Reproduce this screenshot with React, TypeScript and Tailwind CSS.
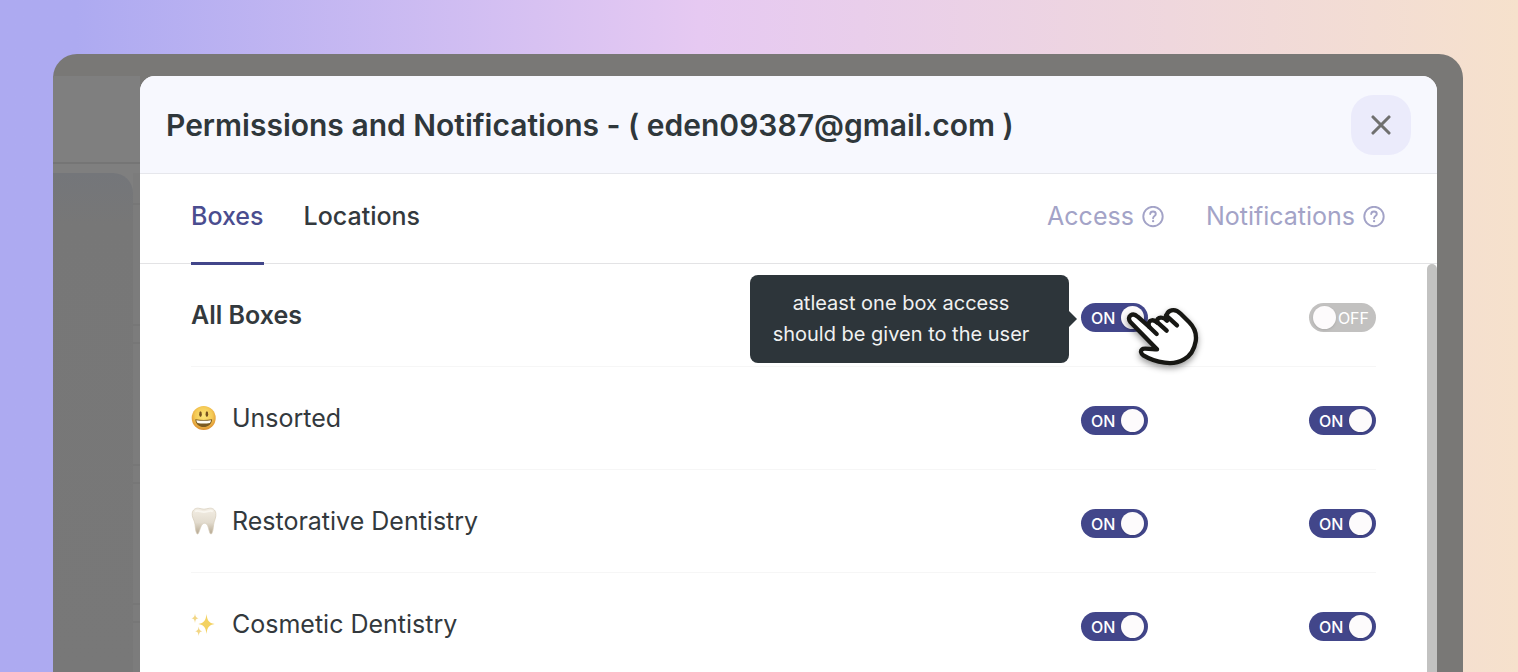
import { useState, type ReactNode } from "react";

function Toggle({ label, on }: { label: string; on: boolean }) {
  const [checked, setChecked] = useState(on);
  return (
    <label
      className={`relative flex h-[29px] w-[67px] cursor-pointer items-center justify-between rounded-full text-base font-medium text-white ${
        checked ? "bg-[#42468a] pr-1 pl-2.5" : "bg-[#c2c1c0] pr-[7px] pl-1"
      }`}
    >
      <input
        type="checkbox"
        role="switch"
        aria-label={label}
        checked={checked}
        onChange={(e) => setChecked(e.target.checked)}
        className="absolute inset-0 cursor-pointer opacity-0"
      />
      {checked && <span className="pt-0.5">ON</span>}
      <span className="size-[23px] rounded-full bg-[#fdfbfc] shadow" />
      {!checked && <span className="pt-0.5 font-normal">OFF</span>}
    </label>
  );
}

function HelpIcon() {
  return (
    <svg viewBox="0 0 22 22" className="size-[22px]" fill="none" stroke="currentColor" strokeWidth="1.9" strokeLinecap="round" aria-hidden="true">
      <circle cx="11" cy="10.5" r="9.7" />
      <path d="M8.2 8C8.300 6.400 9.500 5.500 11 5.500s2.800.9 2.800 2.500c0 1.900-2.700 2.200-2.700 4.200" />
      <circle cx="11.1" cy="15.200" r="1.150" fill="currentColor" stroke="none" />
    </svg>
  );
}

function CloseIcon() {
  return (
    <svg viewBox="0 0 20 20" className="size-5" stroke="#70706f" strokeWidth="3.1" strokeLinecap="round" aria-hidden="true">
      <path d="M2 2l16 16M18 2L2 18" />
    </svg>
  );
}

function SmileIcon() {
  return (
    <svg viewBox="0 0 26 26" className="size-[26px]" aria-hidden="true">
      <defs>
        <radialGradient id="face" cx="50%" cy="40%" r="60%">
          <stop offset="0" stopColor="#fbe67a" />
          <stop offset="0.6" stopColor="#f5ca55" />
          <stop offset="1" stopColor="#dc8f30" />
        </radialGradient>
      </defs>
      <circle cx="12.700" cy="13" r="12" fill="url(#face)" />
      <ellipse cx="9.500" cy="9.200" rx="1.300" ry="2.900" fill="#74501f" />
      <ellipse cx="15.900" cy="9.200" rx="1.300" ry="2.900" fill="#74501f" />
      <path d="M4.300 14.200c5.500 1 11.300 1 16.800 0-.2 4.700-3.800 7.800-8.400 7.800s-8.200-3.100-8.400-7.800z" fill="#7a5a22" />
      <path d="M5.300 15.200c5.100.8 9.700.8 14.800 0-.2 1.200-.6 2.100-1.200 2.700-4 .7-8.400.7-12.400 0-.6-.6-1-1.500-1.200-2.700z" fill="#fffdf5" />
    </svg>
  );
}

function ToothIcon() {
  return (
    <svg viewBox="0 0 26 28" className="h-7 w-[26px]" aria-hidden="true">
      <defs>
        <linearGradient id="tooth" x1="0" y1="0" x2="0" y2="1">
          <stop offset="0" stopColor="#f3eee4" />
          <stop offset="0.55" stopColor="#e3dccf" />
          <stop offset="1" stopColor="#b5a78f" />
        </linearGradient>
      </defs>
      <path
        d="M1.200 6.500C1.600 2.600 4.500.900 7.500 1.200c2 .2 3.500 1 5.500 1s3.500-.8 5.500-1c3-.3 5.900 1.400 6.300 5.300.4 3.500-.9 5.900-1.700 8.500-.9 3.200-.5 8-2.200 11.300-.5 1-1.400.9-1.900-.1-1.300-2.700-1.500-7.500-3.400-9.200-1.200-1-2.800-1-4 0-2 1.700-2.600 6.300-4.100 9.200-.5 1-1.400 1.100-1.900.1-1.500-3.200-1.100-8.100-2.100-11.300C2.700 12.400.900 10 1.200 6.500z"
        fill="url(#tooth)" stroke="#d5cbb9" strokeWidth=".7"
      />
      <path d="M4 4.500c2.500-2 5.500.5 9 .6 3.500-.1 6.500-2.600 9-.6" fill="none" stroke="#f9f6ef" strokeWidth="1.800" />
    </svg>
  );
}

function SparklesIcon() {
  return (
    <svg viewBox="0 0 26 26" className="size-[26px]" fill="#f2d684" aria-hidden="true">
      <path d="M15.500 3c.8 6.600 2.200 8.900 8.200 10-6 1.100-7.400 3.400-8.200 10-.8-6.600-2.200-8.900-8.200-10 6-1.100 7.400-3.400 8.200-10z" fill="#f3d261" />
      <path d="M4 2.500c.4 3.100 1 4.200 3.500 4.700C5 7.700 4.400 8.800 4 11.900 3.600 8.800 3 7.700.500 7.200 3 6.700 3.600 5.600 4 2.500z" />
      <path d="M7.700 15.500c.4 3.100 1 4.200 3.500 4.700-2.500.5-3.100 1.600-3.500 4.700-.4-3.100-1-4.200-3.500-4.700 2.500-.5 3.100-1.600 3.500-4.700z" />
    </svg>
  );
}

function HandPointer() {
  return (
    <svg viewBox="195 108 228 192" className="pointer-events-none absolute top-[3px] left-11 z-20 h-16 w-[76px] overflow-visible drop-shadow-[0_3px_3px_rgba(0,0,0,0.4)]" fill="none" stroke="#171713" strokeWidth="13" strokeLinecap="round" strokeLinejoin="round" aria-hidden="true">
      <path
        d="M211 156C205 148 206 140 212 136C219 131 227 134 233 140L268 171C263 161 268 152 275 151C281 150 287 153 292 158C289 148 296 142 304 143C311 143 316 147 321 152C316 139 321 124 334 121C345 118 354 123 362 131L387 156C401 170 411 190 407 214C403 237 392 257 372 268C355 278 333 281 314 278C293 275 270 268 250 256C242 251 241 242 246 238C253 232 272 240 291 238Z"
        fill="#fff"
      />
      <path d="M268 171L290 192M289 154L320 182M318 136L351 166" />
    </svg>
  );
}

function Tooltip() {
  return (
    <div role="tooltip" className="absolute -top-7 right-full z-10 mr-3 flex h-[88px] w-[319px] items-center rounded-lg bg-[#2d353a] pr-[37px] pl-5">
      <p className="grow text-center text-xl leading-[31px] whitespace-nowrap text-[#f0f1f1]">
        atleast one box access
        <br />
        should be given to the user
      </p>
      <span className="absolute top-1/2 left-full size-0 -translate-y-1/2 border-y-8 border-l-8 border-y-transparent border-l-[#2d353a]" />
    </div>
  );
}

const boxes: { name: string; icon?: ReactNode; access: boolean; notify: boolean; hint?: boolean }[] = [
  { name: "All Boxes", access: true, notify: false, hint: true },
  { name: "Unsorted", icon: <SmileIcon />, access: true, notify: true },
  { name: "Restorative Dentistry", icon: <ToothIcon />, access: true, notify: true },
  { name: "Cosmetic Dentistry", icon: <SparklesIcon />, access: true, notify: true },
];

function BoxRow({ box }: { box: (typeof boxes)[number] }) {
  return (
    <li className="flex h-[103px] items-center border-b border-[#f6f6f6] pt-1">
      <div className="flex grow items-center gap-[15px] pb-1">
        {box.icon}
        <span className={`text-[25px] leading-8 text-[#33393d] ${box.icon ? "" : "font-semibold"}`}>{box.name}</span>
      </div>
      <div className="flex gap-[161px]">
        <div className="relative">
          <Toggle label={`${box.name} access`} on={box.access} />
          {box.hint && <Tooltip />}
          {box.hint && <HandPointer />}
        </div>
        <Toggle label={`${box.name} notifications`} on={box.notify} />
      </div>
    </li>
  );
}

function Backdrop() {
  return (
    <aside className="flex w-[87px] shrink-0 flex-col bg-[#7f7f7f]" aria-hidden="true">
      <div className="h-[88px] shrink-0 border-b-2 border-[#757575]" />
      <div className="mt-[9px] flex grow">
        <div className="w-20 rounded-tr-[20px] bg-linear-to-b from-[#74767a] via-[#777777] via-10% to-[#787878]" />
        <div className="grow bg-[#7c7c7c] pt-[30px]">
          <div className="h-[123px] border-y-2 border-[#777777]" />
          <div className="h-[18px] border-b-2 border-[#777777]" />
          <div className="h-[122px] border-b-2 border-[#777777]" />
          <div className="h-[18px] border-b-2 border-[#777777]" />
          <div className="h-[121px] border-b-2 border-[#777777]" />
          <div className="h-[18px] border-b-2 border-[#777777]" />
        </div>
      </div>
    </aside>
  );
}

export default function App() {
  const [tab, setTab] = useState("Boxes");
  return (
    <div className="flex h-screen overflow-hidden bg-linear-to-r from-[#adaaf1] from-5% via-[#e6c9f2] via-46% to-[#f6e1cc] pt-[54px] pr-[55px] pl-[53px] font-['Inter','Liberation_Sans',sans-serif]">
      <div className="flex min-w-0 grow overflow-hidden rounded-t-3xl bg-[#797876] pt-[22px] pr-[26px]">
        <Backdrop />
        <main className="flex min-w-0 grow flex-col overflow-hidden rounded-t-[15px] bg-white">
          <header className="flex h-[98px] shrink-0 items-center justify-between border-b border-[#e6e7ec] bg-[#f7f8fe] px-[26px]">
            <h1 className="text-3xl leading-10 font-semibold whitespace-nowrap text-[#2f373b]">
              Permissions and Notifications - ( eden09387@gmail.com )
            </h1>
            <button type="button" aria-label="Close" className="flex size-[60px] items-center justify-center rounded-[22px] bg-[#ebebfb]">
              <CloseIcon />
            </button>
          </header>
          <div className="flex h-[90px] shrink-0 justify-between border-b border-[#e3e3e5] pr-[52px] pl-[51px]">
            <nav role="tablist" className="-mb-0.5 flex gap-10 text-[25px] font-medium">
              {["Boxes", "Locations"].map((name) => (
                <button
                  key={name}
                  type="button"
                  role="tab"
                  aria-selected={tab === name}
                  onClick={() => setTab(name)}
                  className={`border-b-3 pb-0.5 ${tab === name ? "border-[#42468a] text-[#4a4d8f]" : "border-transparent text-[#33393d]"}`}
                >
                  {name}
                </button>
              ))}
            </nav>
            <div className="flex items-center gap-[42px] pb-1 text-[25px] text-[#a3a3c7]">
              <span className="flex items-center gap-2">Access <HelpIcon /></span>
              <span className="flex items-center gap-2">Notifications <HelpIcon /></span>
            </div>
          </div>
          <div className="flex min-h-0 grow">
            <ul className="grow pr-[51px] pl-[51px]">
              {boxes.map((box) => (
                <BoxRow key={box.name} box={box} />
              ))}
            </ul>
            <div className="w-2.5 rounded-t-full bg-[#c2c2c1]" />
          </div>
        </main>
      </div>
    </div>
  );
}
